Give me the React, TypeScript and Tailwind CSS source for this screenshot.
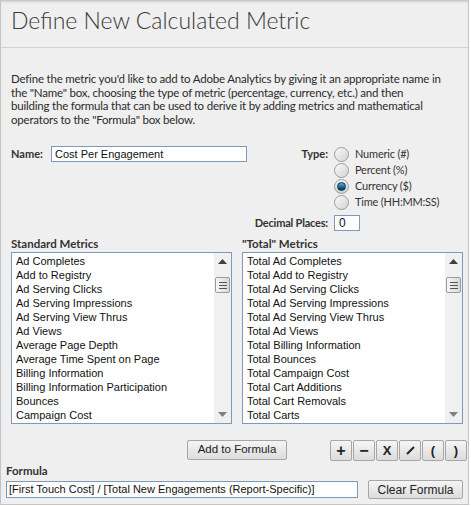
import React from "react";

const adobe = { fontFamily: "Lato, 'Open Sans', sans-serif" };
const arial = { fontFamily: "'Liberation Sans', Arial, sans-serif" };

const standard = [
  "Ad Completes",
  "Add to Registry",
  "Ad Serving Clicks",
  "Ad Serving Impressions",
  "Ad Serving View Thrus",
  "Ad Views",
  "Average Page Depth",
  "Average Time Spent on Page",
  "Billing Information",
  "Billing Information Participation",
  "Bounces",
  "Campaign Cost",
];

const totals = [
  "Total Ad Completes",
  "Total Add to Registry",
  "Total Ad Serving Clicks",
  "Total Ad Serving Impressions",
  "Total Ad Serving View Thrus",
  "Total Ad Views",
  "Total Billing Information",
  "Total Bounces",
  "Total Campaign Cost",
  "Total Cart Additions",
  "Total Cart Removals",
  "Total Carts",
];

function Scrollbar() {
  return (
    <div className="w-[17px] h-full bg-[#f0f0f0] flex flex-col items-center shrink-0">
      <div className="h-[17px] w-full flex items-center justify-center shrink-0">
        <svg width="9" height="5" viewBox="0 0 9 5">
          <path d="M4.5 0 L9 5 L0 5 Z" fill="#404040" />
        </svg>
      </div>
      <div className="mt-[7px] w-[15px] h-[16px] shrink-0 rounded-[2px] border border-[#9a9a9a] bg-gradient-to-r from-[#f6f6f6] to-[#d8d8d8] flex flex-col items-center justify-center gap-[2px]">
        <div className="w-[8px] h-[1px] bg-[#555]" />
        <div className="w-[8px] h-[1px] bg-[#555]" />
        <div className="w-[8px] h-[1px] bg-[#555]" />
      </div>
      <div className="flex-1" />
      <div className="h-[17px] w-full flex items-center justify-center shrink-0">
        <svg width="9" height="5" viewBox="0 0 9 5">
          <path d="M0 0 L9 0 L4.5 5 Z" fill="#808080" />
        </svg>
      </div>
    </div>
  );
}

function ListBox({ items }: { items: string[] }) {
  return (
    <div className="w-[221px] h-[172px] border border-[#8298b8] bg-white flex">
      <div className="flex-1 pl-[4px] pt-[1px] overflow-hidden" style={arial}>
        {items.map((t) => (
          <div key={t} className="h-[14px] leading-[14px] text-[11px] text-[#111] whitespace-nowrap">
            {t}
          </div>
        ))}
      </div>
      <Scrollbar />
    </div>
  );
}

function Radio({ checked, label }: { checked?: boolean; label: string }) {
  return (
    <div className="h-[16px] flex items-center">
      <div
        className={
          "w-[15px] h-[15px] rounded-full border border-[#9c9c9c] flex items-center justify-center " +
          (checked ? "bg-gradient-to-b from-[#f2f2f2] to-[#cfcfcf]" : "bg-gradient-to-br from-[#fafafa] to-[#d4d4d4]")
        }
      >
        {checked && (
          <div className="w-[9px] h-[9px] rounded-full bg-gradient-to-b from-[#5fb0e0] via-[#1e6fa6] to-[#0b3656] border border-[#0c3552]" />
        )}
      </div>
      <span className="ml-[6px] text-[11px] tracking-[-0.2px] text-[#333]" style={adobe}>
        {label}
      </span>
    </div>
  );
}

function Btn({ children, className = "" }: { children: React.ReactNode; className?: string }) {
  return (
    <div
      className={
        "border border-[#a6a6a6] rounded-[2px] bg-gradient-to-b from-[#f5f5f5] to-[#dcdcdc] flex items-center justify-center text-[#222] shrink-0 " +
        className
      }
      style={arial}
    >
      {children}
    </div>
  );
}

export default function App() {
  return (
    <div className="w-[471px] h-[506px] bg-white">
      <div className="w-[469px] h-[505px] bg-[#efefef] border-l border-r border-b border-[#c4c4c4] shadow-[inset_0_3px_3px_-2px_rgba(0,0,0,0.25)] overflow-hidden">
        <div className="h-[48px] border-b border-[#d2d2d2] px-[10px] pt-[6px]">
          <div className="text-[23px] font-light text-[#3a3a3a] leading-[28px]" style={adobe}>
            Define New Calculated Metric
          </div>
        </div>

        <div className="px-[10px]">
          <p className="mt-[24px] text-[11.5px] tracking-[-0.2px] leading-[13.5px] text-[#2b2b2b] whitespace-nowrap" style={adobe}>
            Define the metric you'd like to add to Adobe Analytics by giving it an appropriate name in
            <br />
            the "Name" box, choosing the type of metric (percentage, currency, etc.) and then
            <br />
            building the formula that can be used to derive it by adding metrics and mathematical
            <br />
            operators to the "Formula" box below.
          </p>

          <div className="mt-[20px] flex">
            <div className="w-[236px] flex items-center h-[16px]">
              <span className="w-[40px] text-[11px] font-bold text-[#333]" style={adobe}>
                Name:
              </span>
              <div className="w-[196px] h-[16px] border border-[#8298b8] bg-white pl-[3px] text-[11px] leading-[14px] text-[#111]" style={arial}>
                Cost Per Engagement
              </div>
            </div>
            <div className="grid grid-cols-[81px_auto] gap-x-[6px] gap-y-[5px]">
              <div className="text-right text-[11px] font-bold text-[#333] leading-[16px]" style={adobe}>
                Type:
              </div>
              <div className="flex flex-col">
                <Radio label="Numeric (#)" />
                <Radio label="Percent (%)" />
                <Radio checked label="Currency ($)" />
                <Radio label="Time (HH:MM:SS)" />
              </div>
              <div className="text-right text-[11px] tracking-[-0.2px] font-bold text-[#333] leading-[16px] whitespace-nowrap" style={adobe}>
                Decimal Places:
              </div>
              <div className="w-[26px] h-[16px] border border-[#8298b8] bg-white pl-[4px] text-[12px] leading-[14px] text-[#111]" style={arial}>
                0
              </div>
            </div>
          </div>

          <div className="mt-[5px] flex gap-[10px]">
            <div className="flex flex-col">
              <div className="text-[11.5px] font-bold text-[#333] leading-[16px]" style={adobe}>
                Standard Metrics
              </div>
              <ListBox items={standard} />
            </div>
            <div className="flex flex-col">
              <div className="text-[11.5px] font-bold text-[#333] leading-[16px]" style={adobe}>
                "Total" Metrics
              </div>
              <ListBox items={totals} />
            </div>
          </div>

          <div className="mt-[16px] flex items-start">
            <div className="w-[176px] shrink-0" />
            <Btn className="w-[100px] h-[20px] text-[11.5px]">Add to Formula</Btn>
            <div className="w-[43px] shrink-0" />
            <div className="flex gap-[1px]">
              <Btn className="w-[22px] h-[21px] text-[16px] font-bold">+</Btn>
              <Btn className="w-[22px] h-[21px] text-[16px] font-bold">−</Btn>
              <Btn className="w-[22px] h-[21px] text-[13px] font-bold">X</Btn>
              <Btn className="w-[22px] h-[21px]">
                <svg width="9" height="9" viewBox="0 0 9 9">
                  <path d="M1 8 L8 1" stroke="#222" strokeWidth="2" />
                </svg>
              </Btn>
              <Btn className="w-[22px] h-[21px] text-[13px] font-bold">(</Btn>
              <Btn className="w-[22px] h-[21px] text-[13px] font-bold">)</Btn>
            </div>
          </div>
        </div>

        <div className="px-[5px] mt-[2px]">
          <div className="text-[11.5px] font-bold text-[#333] leading-[16px]" style={adobe}>
            Formula
          </div>
          <div className="mt-[1px] flex items-center">
            <div className="w-[356px] h-[17px] border border-[#8298b8] bg-white pl-[2px] text-[11px] leading-[15px] text-[#111] whitespace-nowrap overflow-hidden" style={arial}>
              [First Touch Cost] / [Total New Engagements (Report-Specific)]
            </div>
            <Btn className="ml-[10px] w-[95px] h-[19px] text-[12px]">Clear Formula</Btn>
          </div>
        </div>
      </div>
    </div>
  );
}
